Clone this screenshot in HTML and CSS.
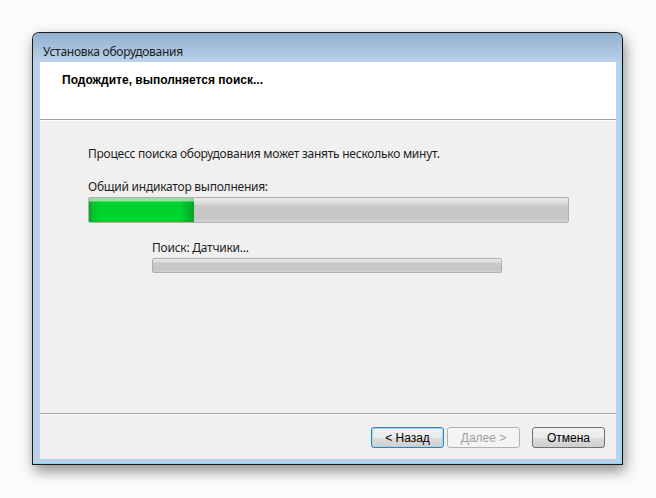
FILE: index.html
```html
<!DOCTYPE html>
<html lang="ru">
<head>
<meta charset="utf-8">
<title>Установка оборудования</title>
<link rel="stylesheet" href="styles.css">
</head>
<body>
<div class="window">
  <div class="titlebar">Установка оборудования</div>
  <div class="client">
    <div class="header">Подождите, выполняется поиск...</div>
    <div class="content">
      <p class="line first">Процесс поиска оборудования может занять несколько минут.</p>
      <p class="line second">Общий индикатор выполнения:</p>
      <div class="progress big"><div class="fill" style="width: 105px"></div></div>
      <div class="sub">
        <p class="line third">Поиск: Датчики...</p>
        <div class="progress small"></div>
      </div>
    </div>
    <div class="footer">
      <button class="btn focused">&lt; Назад</button>
      <button class="btn disabled">Далее &gt;</button>
      <button class="btn cancel">Отмена</button>
    </div>
  </div>
</div>
</body>
</html>
```
FILE: styles.css
```css
html, body {
  margin: 0;
  padding: 0;
}
body {
  background: #fbfbfb;
  padding: 32px 0 0 32px;
  width: 656px;
  height: 498px;
  box-sizing: border-box;
  overflow: hidden;
  font-family: "Noto Sans", "Open Sans", sans-serif;
}
.window {
  width: 591px;
  height: 433px;
  box-sizing: border-box;
  border: 1px solid #1c1c1c;
  border-right-color: #111;
  border-radius: 7px 7px 0 0;
  background: #b9d1ea;
  display: flex;
  flex-direction: column;
  padding: 0 5px 5px 7px;
  box-shadow: inset -1px -1px 0 #6fe0f2, 2px 6px 14px rgba(0,0,0,0.45);
}
.titlebar {
  height: 29px;
  box-sizing: border-box;
  margin: 0 -5px 0 -7px;
  padding: 10px 0 0 10px;
  border-radius: 6px 6px 0 0;
  background: linear-gradient(#93b0cf, #b9d1ea);
  font-size: 12px;
  line-height: 17px;
  color: #1b1b1b;
  letter-spacing: -0.25px;
}
.client {
  flex: 1;
  background: #f0f0f0;
  display: flex;
  flex-direction: column;
  width: 576px;
}
.header {
  height: 58px;
  background: #fff;
  border-bottom: 1px solid #a0a0a0;
  box-shadow: 0 1px 0 #fff;
  box-sizing: border-box;
  padding: 11px 0 0 22px;
  font-family: "Liberation Sans", Arial, sans-serif;
  font-weight: bold;
  font-size: 12px;
  line-height: 15px;
  color: #000;
}
.content {
  flex: 1;
  padding-left: 48px;
  padding-top: 26px;
}
.line {
  margin: 0;
  font-size: 12px;
  line-height: 16px;
  color: #1e1e1e;
  letter-spacing: -0.25px;
}
.second {
  margin-top: 17px;
}
.progress {
  box-sizing: border-box;
  border: 1px solid #b0b0b0;
  border-radius: 2px;
  background: linear-gradient(#ececec 0%, #d8d8d8 25%, #c9c9c9 35%, #c6c6c6 85%, #d2d2d2 100%);
  overflow: hidden;
}
.big {
  width: 481px;
  height: 26px;
  margin-top: 2px;
}
.fill {
  height: 100%;
  background:
    linear-gradient(rgba(255,255,255,0.55) 0, rgba(255,255,255,0.55) 3px, rgba(255,255,255,0) 4px),
    linear-gradient(90deg, #0ba32a 0, #06c22e 4px, #00d22e 12px, #00d22e calc(100% - 14px), #05b82d calc(100% - 6px), #0aa22a 100%);
}
.sub {
  padding-left: 64px;
  margin-top: 17px;
}
.small {
  width: 350px;
  height: 15px;
  margin-top: 2px;
}
.footer {
  height: 46px;
  border-top: 1px solid #a0a0a0;
  box-shadow: inset 0 1px 0 #fff;
  box-sizing: border-box;
  display: flex;
  align-items: flex-start;
  justify-content: flex-end;
  padding: 13px 11px 0 0;
}
.btn {
  width: 73px;
  height: 21px;
  box-sizing: border-box;
  border: 1px solid #707070;
  border-radius: 3px;
  background: linear-gradient(#f2f2f2 0%, #ebebeb 50%, #dddddd 51%, #cfcfcf 100%);
  font-family: "Liberation Sans", Arial, sans-serif;
  font-size: 12px;
  color: #000;
  padding: 0;
  margin: 0;
}
.focused {
  border-color: #3c7fb1;
  box-shadow: inset 0 0 0 1px #9fdaf4;
  margin-right: 3px;
}
.disabled {
  border-color: #adb2b5;
  background: #f4f4f4;
  color: #a0a0a0;
  margin-right: 12px;
}
```
